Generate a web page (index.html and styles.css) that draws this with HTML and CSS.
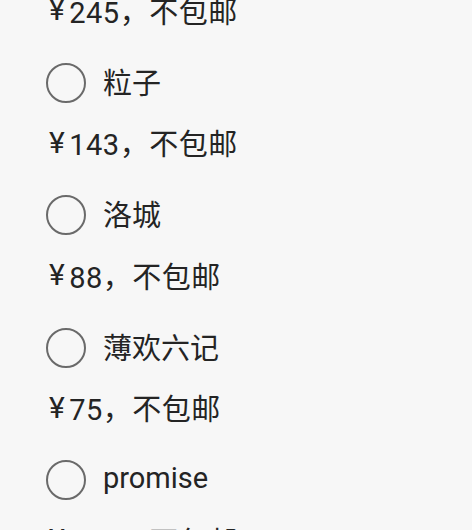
FILE: index.html
```html
<!DOCTYPE html>
<html lang="zh-CN">
<head>
    <meta charset="UTF-8">
    <meta name="viewport" content="width=device-width, initial-scale=1.0">
    <title>选择</title>
    <link rel="stylesheet" href="styles.css">
</head>
<body>
    <div class="list">
        <label class="item">
            <span class="option"><span class="radio"></span><span class="name">鹿鸣</span></span>
            <span class="price"><span class="yen">¥</span>245，不包邮</span>
        </label>
        <label class="item">
            <span class="option"><span class="radio"></span><span class="name">粒子</span></span>
            <span class="price"><span class="yen">¥</span>143，不包邮</span>
        </label>
        <label class="item">
            <span class="option"><span class="radio"></span><span class="name">洛城</span></span>
            <span class="price"><span class="yen">¥</span>88，不包邮</span>
        </label>
        <label class="item">
            <span class="option"><span class="radio"></span><span class="name">薄欢六记</span></span>
            <span class="price"><span class="yen">¥</span>75，不包邮</span>
        </label>
        <label class="item">
            <span class="option"><span class="radio"></span><span class="name">promise</span></span>
            <span class="price"><span class="yen">¥</span>105，不包邮</span>
        </label>
    </div>
</body>
</html>
```

FILE: styles.css
```css
* {
    margin: 0;
    padding: 0;
    box-sizing: border-box;
}

body {
    background: #f7f7f7;
    color: #242424;
    font-family: Roboto, "Noto Sans CJK SC", sans-serif;
    height: 100vh;
    overflow: hidden;
}

/* Lista de opções */
.list {
    margin-top: -78px;
    padding-left: 46px;
    display: flex;
    flex-direction: column;
}

.item {
    display: flex;
    flex-direction: column;
    padding-bottom: 8.5px;
}

.option {
    height: 56px;
    display: flex;
    align-items: center;
    gap: 17px;
}

.radio {
    width: 40px;
    height: 40px;
    border: 2px solid #6a6a6a;
    border-radius: 50%;
    flex-shrink: 0;
}

.name {
    font-size: 29px;
    padding-bottom: 4px;
}

.price {
    height: 68px;
    display: flex;
    align-items: center;
    font-size: 29px;
    letter-spacing: 0.5px;
    padding-left: 3px;
    padding-bottom: 5px;
}

.yen {
    font-size: 30px;
    margin-right: 4px;
}
```
